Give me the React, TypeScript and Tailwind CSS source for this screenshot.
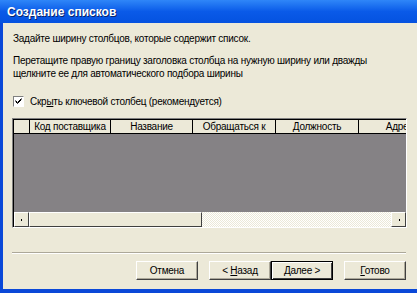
import React from "react";

const font = { fontFamily: '"Liberation Sans", Arial, sans-serif' };

// Column headers of the table preview
const columns = [
  { title: "Код поставщика", width: 81 },
  { title: "Название", width: 82 },
  { title: "Обращаться к", width: 83 },
  { title: "Должность", width: 83 },
  { title: "Адрес", width: 82 },
];

const Button: React.FC<{ label: React.ReactNode; primary?: boolean; className?: string }> = ({
  label,
  primary,
  className = "",
}) => (
  <div
    className={`flex h-[19px] w-[62px] items-center justify-center bg-[#ece9d8] text-[10px] text-black ${
      primary
        ? "border border-black shadow-[inset_1px_1px_0_#fff,inset_-1px_-1px_0_#404040]"
        : "border-t border-l border-t-white border-l-white border-r border-b border-r-[#404040] border-b-[#404040] shadow-[inset_-1px_-1px_0_#aca899]"
    } ${className}`}
  >
    {label}
  </div>
);

const ScrollArrow: React.FC<{ dir: "left" | "right" }> = ({ dir }) => (
  <div className="flex h-[15px] w-[15px] shrink-0 items-center justify-center border-t border-l border-white border-r border-b border-r-[#404040] border-b-[#404040] bg-[#ece9d8]">
    <div
      className={`h-[2px] w-[1px] bg-black ${dir === "left" ? "mr-[1px]" : "ml-[1px]"}`}
    />
  </div>
);

export default function App() {
  return (
    <div className="flex h-[293px] w-[417px] flex-col overflow-hidden bg-[#0a48d8]" style={font}>
      {/* title bar */}
      <div className="flex h-[23px] shrink-0 items-center bg-gradient-to-b from-[#2f86f8] via-[#0a5ae8] to-[#0552e0] pl-[7px]">
        <span className="text-[12px] font-bold text-white [text-shadow:1px_1px_0_#0a246a]">
          Создание списков
        </span>
      </div>

      {/* body */}
      <div className="ml-[3px] mb-[4px] flex flex-1 flex-col bg-[#ece9d8] text-[10px] leading-[13px] tracking-[-0.25px] text-black">
        <p className="mt-[9px] ml-[10px]">Задайте ширину столбцов, которые содержит список.</p>
        <p className="mt-[9px] ml-[10px]">
          Перетащите правую границу заголовка столбца на нужную ширину или дважды
          <br />
          щелкните ее для автоматического подбора ширины
        </p>

        <div className="mt-[15px] ml-[10px] flex items-center gap-[6px]">
          <div className="relative h-[11px] w-[11px] border-t border-l border-[#808080] border-r border-b border-r-white border-b-white bg-white">
            <svg viewBox="0 0 9 9" className="absolute left-0 top-0 h-[9px] w-[9px]">
              <path d="M1.5 3.5 L3.5 5.5 L7.5 1.5 M1.5 4.5 L3.5 6.5 L7.5 2.5" stroke="black" strokeWidth="1" fill="none" />
            </svg>
          </div>
          <span>
            Скр<span className="underline">ы</span>ть ключевой столбец (рекомендуется)
          </span>
        </div>

        {/* table preview */}
        <div className="mt-[10px] ml-[9px] flex h-[110px] w-[395px] flex-col border-t border-l border-t-[#808080] border-l-[#808080] border-r border-b border-r-white border-b-white">
          <div className="flex flex-1 flex-col overflow-hidden border-t border-l border-black">
            <div className="flex h-[14px] shrink-0 border-b border-black bg-[#ece9d8]">
              <div className="w-[16px] shrink-0 border-r border-black" />
              {columns.map((c, i) => (
                <div
                  key={i}
                  style={{ width: c.width }}
                  className="flex shrink-0 items-center justify-center overflow-hidden whitespace-nowrap border-r border-black leading-[13px]"
                >
                  {c.title}
                </div>
              ))}
            </div>
            <div className="flex-1 bg-[#858285]" />
            <div className="flex h-[15px] shrink-0">
              <ScrollArrow dir="left" />
              <div className="h-[15px] w-[173px] shrink-0 border-t border-l border-white border-r border-b border-r-[#404040] border-b-[#404040] bg-[#ece9d8]" />
              <div className="flex-1 bg-[repeating-conic-gradient(#fff_0_25%,#ece9d8_0_50%)] bg-[length:2px_2px]" />
              <ScrollArrow dir="right" />
            </div>
          </div>
        </div>

        {/* separator */}
        <div className="mt-[24px] ml-[9px] h-[2px] w-[394px] border-t border-[#aca899] border-b border-b-white" />

        <div className="mt-[7px] flex">
          <Button label="Отмена" className="ml-[133px]" />
          <Button label={<span>&lt; <span className="underline">Н</span>азад</span>} className="ml-[11px]" />
          <Button label={<span><span className="underline">Д</span>алее &gt;</span>} primary />
          <Button label={<span><span className="underline">Г</span>отово</span>} className="ml-[11px]" />
        </div>
      </div>
    </div>
  );
}
